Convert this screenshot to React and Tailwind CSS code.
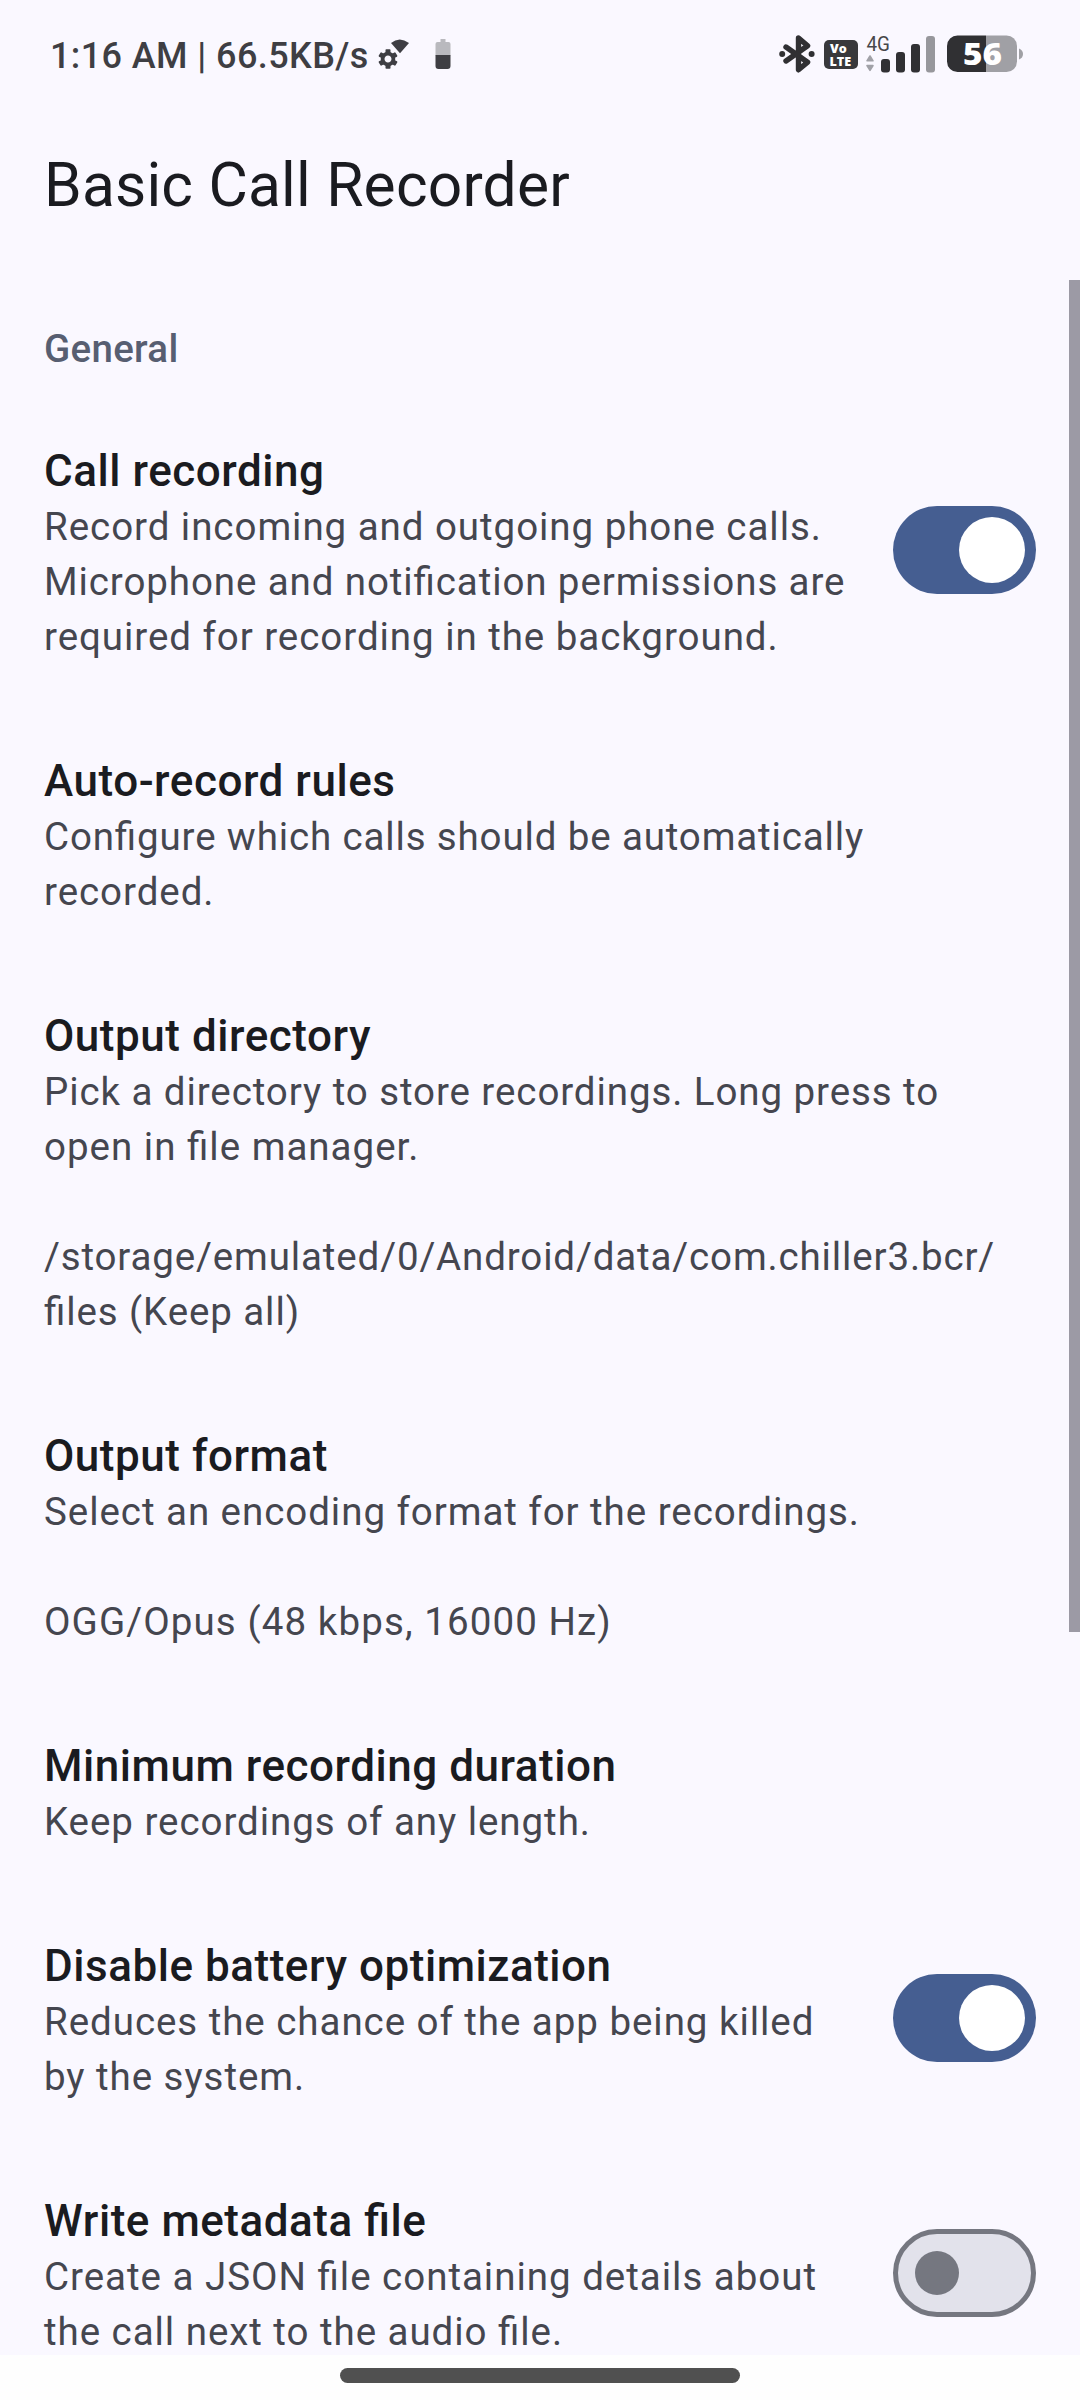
import React, { useState } from 'react';

const initialPreferences = [
    {
        key: 'recording',
        title: 'Call recording',
        lines: [
            { text: 'Record incoming and outgoing phone calls.' },
            { text: 'Microphone and notification permissions are', tracking: 'tracking-[0.9px]' },
            { text: 'required for recording in the background.' },
        ],
        checked: true,
    },
    {
        key: 'rules',
        title: 'Auto-record rules',
        lines: [
            { text: 'Configure which calls should be automatically', tracking: 'tracking-[0.86px]' },
            { text: 'recorded.' },
        ],
    },
    {
        key: 'directory',
        title: 'Output directory',
        lines: [
            { text: 'Pick a directory to store recordings. Long press to', tracking: 'tracking-[0.92px]' },
            { text: 'open in file manager.', tracking: 'tracking-[1px]' },
            { text: '' },
            { text: '/storage/emulated/0/Android/data/com.chiller3.bcr/', tracking: 'tracking-[0.86px]' },
            { text: 'files (Keep all)', tracking: 'tracking-[0.9px]' },
        ],
    },
    {
        key: 'format',
        title: 'Output format',
        lines: [
            { text: 'Select an encoding format for the recordings.' },
            { text: '' },
            { text: 'OGG/Opus (48 kbps, 16000 Hz)', tracking: 'tracking-[1.1px]' },
        ],
    },
    {
        key: 'duration',
        title: 'Minimum recording duration',
        lines: [{ text: 'Keep recordings of any length.' }],
    },
    {
        key: 'battery',
        title: 'Disable battery optimization',
        lines: [{ text: 'Reduces the chance of the app being killed' }, { text: 'by the system.' }],
        checked: true,
    },
    {
        key: 'metadata',
        title: 'Write metadata file',
        lines: [
            { text: 'Create a JSON file containing details about', tracking: 'tracking-[0.98px]' },
            { text: 'the call next to the audio file.' },
        ],
        checked: false,
    },
];

const GEAR_ANGLES = [0, 60, 120, 180, 240, 300];

const GearWifiIcon = () => (
    <svg width="34" height="44" viewBox="0 0 34 44" className="ml-[9px] text-[#3e3e43]">
        <g transform="translate(10 27)">
            <circle r="5.4" fill="none" stroke="currentColor" strokeWidth="3.8" />
            {GEAR_ANGLES.map((angle) => (
                <rect
                    key={angle}
                    x="-2.5"
                    y="-9.7"
                    width="5"
                    height="4.4"
                    rx="0.8"
                    fill="currentColor"
                    transform={`rotate(${angle})`}
                />
            ))}
        </g>
        <path d="M13 11Q21.5 4 31 11L22 21.3Z" fill="currentColor" />
    </svg>
);

const SmallBatteryIcon = () => (
    <svg width="16" height="44" viewBox="0 0 16 44" className="ml-[23px]">
        <path d="M5.5 7h5v3h3a2 2 0 0 1 2 2v11.5H0.5V12a2 2 0 0 1 2-2h3z" fill="#b9b9be" />
        <path d="M0.5 23h15v11a3 3 0 0 1-3 3h-9a3 3 0 0 1-3-3z" fill="#3e3e43" />
    </svg>
);

const BluetoothIcon = () => (
    <svg width="36" height="44" viewBox="0 0 36 44" className="text-[#303033]">
        <path
            d="M7 15L28.6 30.2L19.5 37.8V6L28.6 13.8L7 29"
            fill="none"
            stroke="currentColor"
            strokeWidth="5.4"
            strokeLinejoin="round"
            strokeLinecap="round"
        />
        <circle cx="3.2" cy="22" r="3" fill="currentColor" />
        <circle cx="32.6" cy="22" r="3" fill="currentColor" />
    </svg>
);

const VolteIcon = () => (
    <svg width="34" height="44" viewBox="0 0 34 44" className="ml-[9px]">
        <rect x="0" y="8" width="34" height="29" rx="5" fill="#38383b" />
        <text fontSize="12.6" className="font-[Open_Sans,sans-serif] font-extrabold" fill="#fff">
            <tspan x="6" y="21.2">Vo</tspan>
            <tspan x="5.4" y="33.6">LTE</tspan>
        </text>
    </svg>
);

const SignalIcon = () => (
    <svg width="70" height="44" viewBox="0 0 70 44" className="ml-2">
        <text x="0.5" y="19" fontSize="19.5" textLength="23.5" lengthAdjust="spacingAndGlyphs" className="font-[Roboto,sans-serif]" fill="#47474a">4G</text>
        <path d="M4 24L7 28.8H1Z M4 38.4L7 33.6H1Z" fill="#a1a1a7" stroke="#a1a1a7" strokeWidth="1.6" strokeLinejoin="round" />
        <rect x="15" y="27" width="9" height="13.4" rx="3" fill="#303033" />
        <rect x="30" y="20" width="9" height="20.4" rx="3" fill="#303033" />
        <rect x="45" y="12" width="9" height="28.4" rx="3" fill="#303033" />
        <rect x="60" y="4" width="9" height="36.4" rx="3" fill="#97979c" />
    </svg>
);

const BatteryIcon = () => (
    <svg width="76" height="44" viewBox="0 0 76 44" className="ml-[11px]">
        <path d="M10.5 3.5H39V40H10.5a10.5 10.5 0 0 1-10.5-10.5V14a10.5 10.5 0 0 1 10.5-10.5z" fill="#303033" />
        <path d="M39 3.5H59.5a10.5 10.5 0 0 1 10.5 10.5V29.5a10.5 10.5 0 0 1-10.5 10.5H39z" fill="#a0a0a5" />
        <path d="M72 16.5q4 1.5 4 5.5t-4 5.5z" fill="#a0a0a5" />
        <text x="16" y="33" fontSize="30.5" textLength="39" lengthAdjust="spacingAndGlyphs" className="font-[Open_Sans,sans-serif] font-extrabold" fill="#fff">56</text>
    </svg>
);

const StatusBar = () => (
    <div className="flex h-[108px] shrink-0 items-center pl-[50px] pr-[57px]">
        <span className="pt-[3px] text-[36px] leading-none font-medium tracking-[0.4px] whitespace-nowrap text-[#3e3e43]">
            1:16 AM | 66.5KB/s
        </span>
        <GearWifiIcon />
        <SmallBatteryIcon />
        <div className="ml-auto flex items-center">
            <BluetoothIcon />
            <VolteIcon />
            <SignalIcon />
            <BatteryIcon />
        </div>
    </div>
);

const Toggle = ({ checked, onChange }) => (
    <button
        type="button"
        role="switch"
        aria-checked={checked}
        onClick={onChange}
        className={
            checked
                ? 'mb-2 flex h-22 w-[143px] shrink-0 items-center justify-end rounded-full bg-[#455e91] pr-[11px]'
                : 'mb-2 flex h-22 w-[143px] shrink-0 items-center rounded-full border-[5.5px] border-[#757780] bg-[#e2e2eb] pl-[17px]'
        }
    >
        <span className={checked ? 'size-[66px] rounded-full bg-white' : 'size-11 rounded-full bg-[#757780]'} />
    </button>
);

const PreferenceRow = ({ preference, onToggle }) => (
    <div className="flex shrink-0 items-center justify-between px-11 pt-[46px] pb-11">
        <div className="whitespace-nowrap">
            <h2 className="text-[44px] leading-[55px] font-medium tracking-[0.53px] text-[#1a1b20]">
                {preference.title}
            </h2>
            {preference.lines.map((line, index) => (
                <p
                    key={index}
                    className={`h-[55px] text-[38.5px] leading-[55px] text-[#45464f] ${line.tracking || 'tracking-[0.95px]'}`}
                >
                    {line.text}
                </p>
            ))}
        </div>
        {preference.checked !== undefined && (
            <Toggle checked={preference.checked} onChange={() => onToggle(preference.key)} />
        )}
    </div>
);

const App = () => {
    const [preferences, setPreferences] = useState(initialPreferences);

    const handleToggle = (key) => {
        setPreferences(preferences.map((p) => (p.key === key ? { ...p, checked: !p.checked } : p)));
    };

    return (
        <div className="flex h-[2400px] w-[1080px] flex-col overflow-hidden bg-[#faf8ff] font-[Roboto,sans-serif]">
            <StatusBar />

            <header className="flex h-[172px] shrink-0 items-start pt-[42px] pl-11">
                <h1 className="text-[60.5px] leading-[72px] tracking-[0.2px] text-[#1a1b20]">Basic Call Recorder</h1>
            </header>

            {/* Preference list, "fi" is drawn as a ligature */}
            <main className="relative flex h-[2075px] shrink-0 flex-col overflow-hidden [font-feature-settings:'liga'_1]">
                <div className="h-[118px] shrink-0 pt-[41px] pl-11 text-[38.5px] leading-[55px] font-medium tracking-[0.3px] text-[#575e71]">
                    General
                </div>
                {preferences.map((preference) => (
                    <PreferenceRow key={preference.key} preference={preference} onToggle={handleToggle} />
                ))}
                <div className="absolute top-0 right-0 h-[1352px] w-[11px] bg-[#9c9aa5]" />
            </main>

            {/* Gesture navigation */}
            <nav className="flex grow items-start justify-center bg-[#fefefe] pt-[13px]">
                <div className="h-[15px] w-[400px] rounded-full bg-[#505050]" />
            </nav>
        </div>
    );
};

export default App;
